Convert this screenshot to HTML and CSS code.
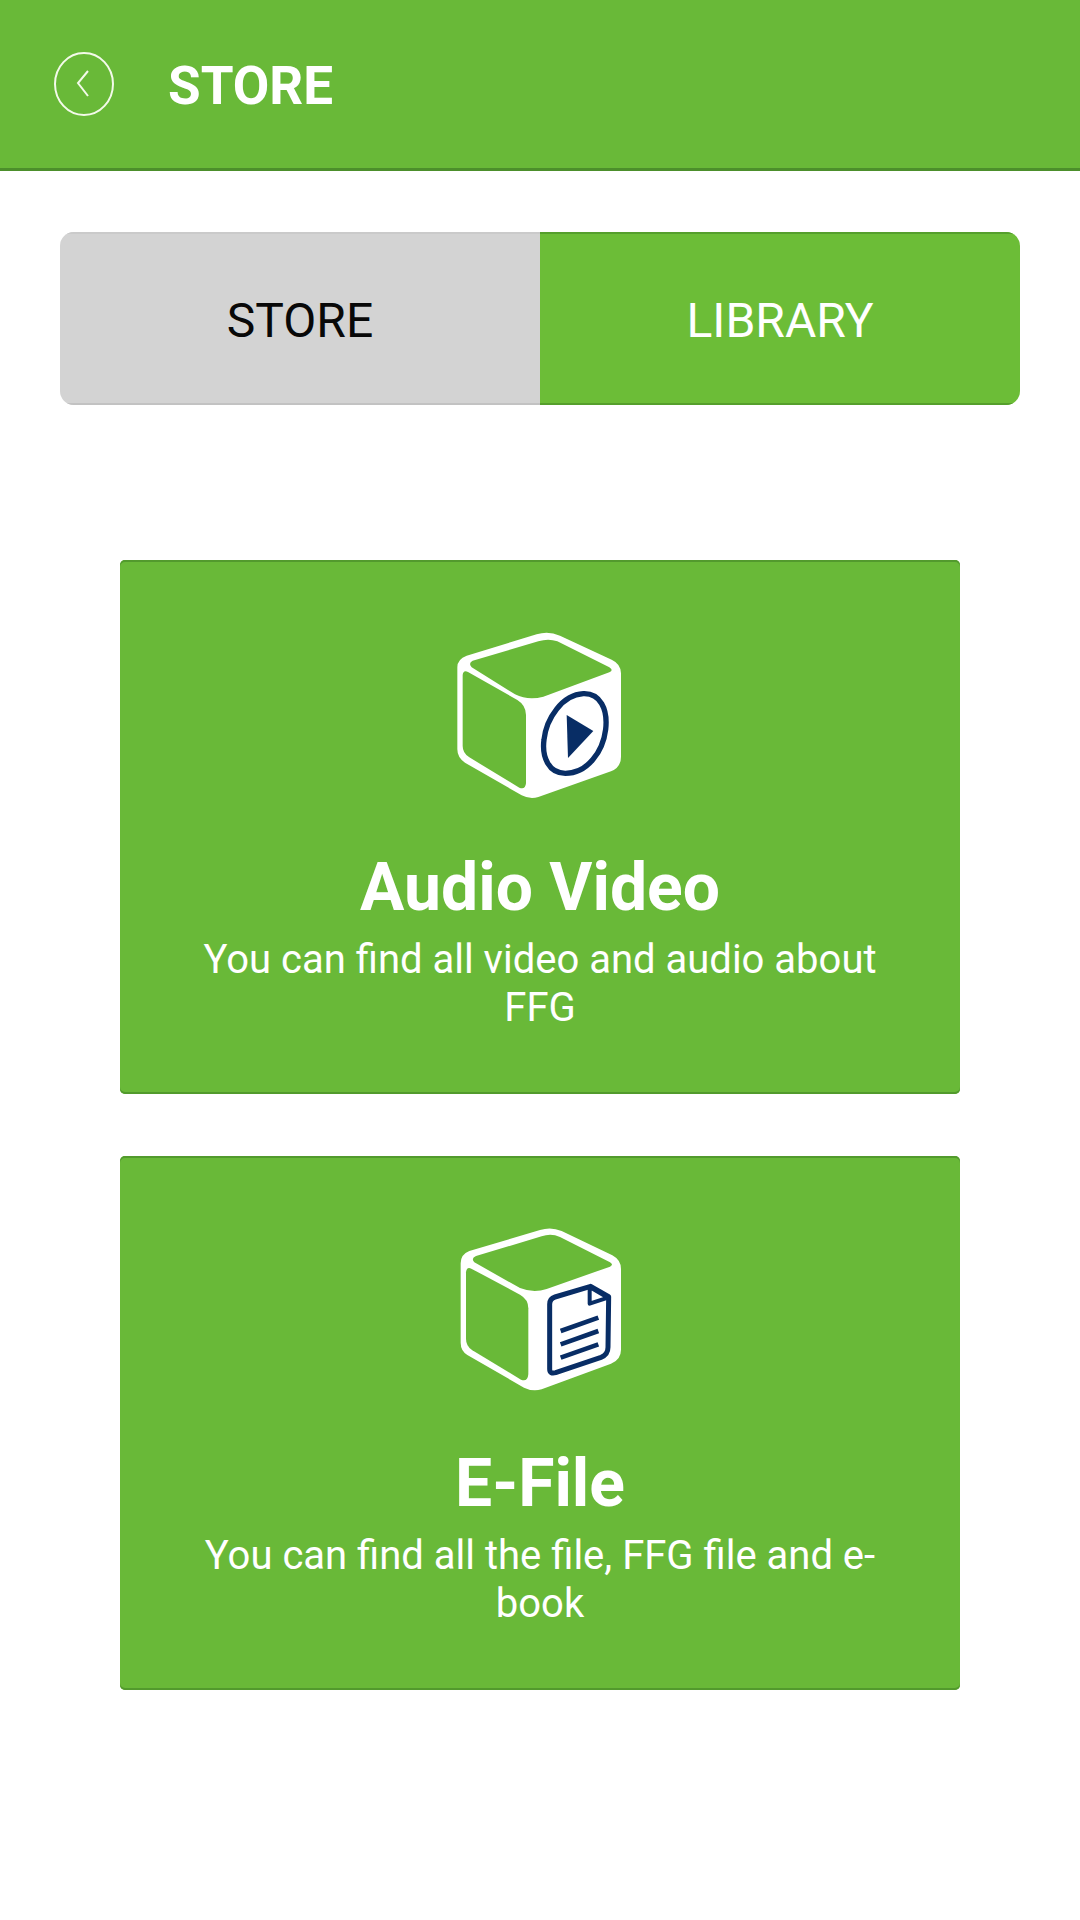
FILE: index.html
```
<!DOCTYPE html>
<html lang="en">

<head>
    <meta charset="UTF-8">
    <meta name="viewport" content="width=device-width, initial-scale=1.0">
    <title>Store</title>
    <link rel="stylesheet" href="styles.css">
</head>

<body>
    <header class="header">
        <button type="button" class="back" aria-label="Back">
            <svg width="60" height="66" viewBox="0 0 60 66" fill="none" stroke="#f3fae9">
                <ellipse cx="30" cy="33" rx="29" ry="31" stroke-width="2" />
                <path d="M34 20 L24 32 L34 45" stroke-width="2" />
            </svg>
        </button>
        <h1>STORE</h1>
    </header>

    <main>
        <div class="tabs">
            <button type="button" class="tab">STORE</button>
            <button type="button" class="tab active">LIBRARY</button>
        </div>

        <div class="cards">
            <a href="#audio-video" class="card">
                <svg class="icon" viewBox="0 0 600 630" aria-hidden="true">
                    <path fill="#fff" d="M80 137 L290 73 Q325 62 360 77 L515 149 Q543 162 543 190 L543 440 Q543 472 513 484 L295 561 Q270 569 245 556 L75 458 Q52 443 52 418 L52 172 Q52 147 80 137 Z" />
                    <path fill="#69b938" d="M98 152 L295 94 Q325 85 352 94 L508 172 Q522 181 508 187 L310 260 Q265 273 225 253 L95 172 Q84 160 98 152 Z" />
                    <path fill="#69b938" d="M84 186 L232 270 Q258 286 258 315 L258 520 Q256 540 238 533 L88 442 Q68 430 68 408 L68 195 Q70 179 84 186 Z" />
                    <path fill="#fff" stroke="#082d65" stroke-width="16" d="M430 251 C480 249 504 297 497 358 C489 424 443 490 376 490 C327 490 305 442 312 389 C319 325 367 254 430 251 Z" />
                    <path fill="#082d65" d="M380 315 L460 363 L384 444 Z" />
                </svg>
                <h2>Audio Video</h2>
                <p>You can find all video and audio about FFG</p>
            </a>

            <a href="#e-file" class="card">
                <svg class="icon" viewBox="0 -9 600 630" aria-hidden="true">
                    <path fill="#fff" d="M88 126 L300 63 Q333 52 365 66 L517 139 Q543 153 543 180 L543 422 Q543 452 513 464 L305 541 Q278 549 252 536 L82 438 Q62 425 62 401 L62 163 Q62 136 88 126 Z" />
                    <path fill="#69b938" d="M108 141 L305 82 Q333 71 360 84 L510 160 Q522 167 510 173 L320 240 Q280 253 240 237 L103 160 Q92 147 108 141 Z" />
                    <path fill="#69b938" d="M94 179 L240 257 Q265 271 265 298 L265 495 Q263 520 243 512 L97 424 Q78 412 78 390 L78 190 Q80 172 94 179 Z" />
                    <path fill="#fff" stroke="#082d65" stroke-width="15" stroke-linejoin="round" d="M452 232 L345 264 Q329 269 329 286 L329 480 Q329 496 347 491 L483 445 Q504 437 504 415 L506 263 Z" />
                    <path fill="#fff" stroke="#082d65" stroke-width="12" stroke-linejoin="round" d="M449 234 L449 284 L504 266 Z" />
                    <path stroke="#082d65" stroke-width="14" d="M362 366 L475 326 M362 406 L475 366 M362 446 L475 406" />
                </svg>
                <h2>E-File</h2>
                <p>You can find all the file, FFG file and e-book</p>
            </a>
        </div>
    </main>
</body>

</html>
```
FILE: styles.css
```
* {
    box-sizing: border-box;
}

body {
    margin: 0;
    background-color: #fff;
    font-family: Roboto, sans-serif;
}

.header {
    display: flex;
    align-items: center;
    gap: 54px;
    padding: 49px 54px;
    background-color: #69b938;
    border-bottom: 3px solid #4c8f2b;
    color: #fff;
}

.header h1 {
    margin: 0;
    padding-top: 4px;
    font-size: 53px;
    line-height: 66px;
}

.back {
    display: flex;
    padding: 0;
    border: none;
    background: none;
    cursor: pointer;
}

.tabs {
    display: flex;
    margin: 61px 60px 0;
    border-radius: 14px;
    overflow: hidden;
}

.tab {
    flex: 1;
    padding: 58px 0 53px;
    border: none;
    background-color: #d3d3d3;
    box-shadow: inset 0 2px #cacaca, inset 0 -2px #c2c2c2;
    color: #080808;
    font-family: inherit;
    font-size: 48px;
    line-height: 62px;
    cursor: pointer;
}

.tab.active {
    background-color: #6cbd37;
    box-shadow: inset 0 2px #559f2c, inset 0 -2px #559f2c;
    color: #fff;
}

.cards {
    display: flex;
    flex-direction: column;
    gap: 62px;
    padding: 155px 120px 60px;
}

.card {
    display: flex;
    flex-direction: column;
    align-items: center;
    padding: 50px 60px 62px;
    border-radius: 5px;
    background-color: #69b938;
    box-shadow: inset 0 2px #529a2d, inset 0 -2px #529a2d;
    color: #fff;
    text-align: center;
    text-decoration: none;
}

.icon {
    width: 200px;
    height: 210px;
}

.card h2 {
    margin: 24px 0 4px;
    font-size: 66px;
    line-height: 88px;
}

.card p {
    margin: 0;
    font-size: 40px;
    line-height: 48px;
}
```
